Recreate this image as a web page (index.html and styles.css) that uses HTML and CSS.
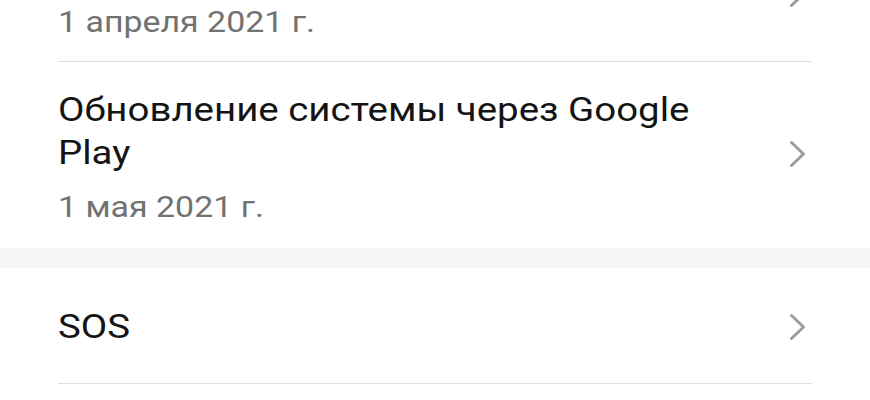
FILE: index.html
```html
<!DOCTYPE html>
<html lang="ru">
<head>
    <meta charset="UTF-8">
    <title>Обновления</title>
    <link rel="stylesheet" href="styles.css">
</head>
<body class="page">
<div class="list top">
    <div class="row">
        <div class="row-text">
            <div class="title">Обновление безопасности</div>
            <div class="date">1 апреля 2021 г.</div>
        </div>
        <svg class="chev" width="17" height="28" viewBox="0 0 17 28"><polyline points="2.5,2.5 14.5,14 2.5,25.5"/></svg>
    </div>
    <div class="row last">
        <div class="row-text">
            <div class="title">Обновление системы через Google Play</div>
            <div class="date">1 мая 2021 г.</div>
        </div>
        <svg class="chev" width="17" height="28" viewBox="0 0 17 28"><polyline points="2.5,2.5 14.5,14 2.5,25.5"/></svg>
    </div>
</div>
<div class="band"></div>
<div class="list">
    <div class="row single">
        <div class="row-text">
            <div class="title">SOS</div>
        </div>
        <svg class="chev" width="17" height="28" viewBox="0 0 17 28"><polyline points="2.5,2.5 14.5,14 2.5,25.5"/></svg>
    </div>
</div>
</body>
</html>
```

FILE: styles.css
```css
html, body {
    margin: 0;
    padding: 0;
    background: #fff;
}
.page {
    font-family: Roboto, "Noto Sans", sans-serif;
    overflow: hidden;
    height: 400px;
}
.list {
    padding: 0 58px;
}
.list.top {
    margin-top: -80px;
}
.row {
    display: flex;
    align-items: center;
    padding: 26px 0 19px;
    border-bottom: 1px solid #dedede;
}
.row.last {
    border-bottom: none;
    padding-bottom: 21px;
}
.row.last .chev {
    margin-bottom: 7px;
}
.row.single {
    padding: 37px 0 35px;
}
.row-text {
    flex: 1;
}
/* text on this screen is a little wider than plain Roboto */
.title,
.date {
    max-width: 590px;
    transform: scaleX(1.13);
    transform-origin: left center;
}
.title {
    font-size: 34px;
    line-height: 43px;
    color: #141414;
}
.date {
    margin-top: 13px;
    font-size: 30px;
    line-height: 40px;
    color: #727272;
}
.chev {
    margin-right: 6px;
    flex: none;
}
.chev polyline {
    fill: none;
    stroke: #9c9c9c;
    stroke-width: 3;
    stroke-linecap: round;
    stroke-linejoin: round;
}
.band {
    height: 20px;
    background: #f5f5f5;
}
```
